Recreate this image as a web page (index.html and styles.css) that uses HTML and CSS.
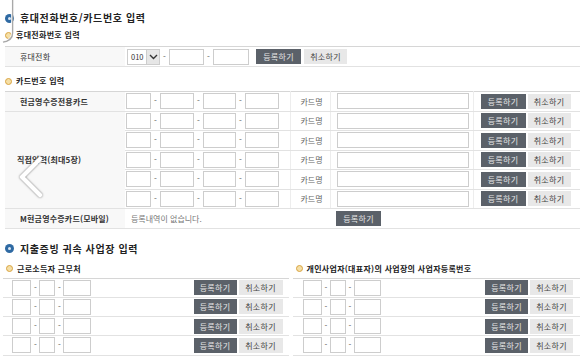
FILE: index.html
```html
<!DOCTYPE html>
<html lang="ko">
<head>
    <meta charset="UTF-8">
    <meta name="viewport" content="width=device-width, initial-scale=1.0">
    <title>휴대전화번호/카드번호 입력</title>
    <link rel="stylesheet" href="styles.css">
</head>
<body>
    <div class="wrap">
        <h2 class="tit"><span class="ico-blue"></span>휴대전화번호/카드번호 입력</h2>
        <h3 class="sub"><span class="ico-gold"></span>휴대전화번호 입력</h3>

        <table class="tbl tbl-phone">
            <colgroup><col class="c-label"><col></colgroup>
            <tr>
                <th class="normal">휴대전화</th>
                <td>
                    <div class="field pl2">
                        <span class="sel">010<span class="arr"><svg width="9" height="6" viewBox="0 0 9 6"><path d="M1 1 L4.5 4.5 L8 1" fill="none" stroke="#333" stroke-width="1.4"/></svg></span></span>
                        <span class="dash">-</span>
                        <input type="text" class="w35">
                        <span class="dash">-</span>
                        <input type="text" class="w36">
                        <button class="btn btn-reg ml7">등록하기</button>
                        <button class="btn btn-cancel">취소하기</button>
                    </div>
                </td>
            </tr>
        </table>

        <h3 class="sub sub-card"><span class="ico-gold"></span>카드번호 입력</h3>

        <table class="tbl tbl-card">
            <colgroup>
                <col class="c-label"><col class="c-nums"><col class="c-nm"><col class="c-nmin"><col>
            </colgroup>
            <tr>
                <th>현금영수증전용카드</th>
                <td><div class="field pl1"><input type="text" class="w25"><span class="dash">-</span><input type="text" class="w34"><span class="dash">-</span><input type="text" class="w33"><span class="dash">-</span><input type="text" class="w34"></div></td>
                <td class="nm vl">카드명</td>
                <td class="vl"><input type="text" class="w132 ml6"></td>
                <td class="vl"><div class="field pl7"><button class="btn btn-reg">등록하기</button><button class="btn btn-cancel">취소하기</button></div></td>
            </tr>
            <tr>
                <th rowspan="5" class="pl12">직접입력(최대5장)</th>
                <td><div class="field pl1"><input type="text" class="w25"><span class="dash">-</span><input type="text" class="w34"><span class="dash">-</span><input type="text" class="w33"><span class="dash">-</span><input type="text" class="w34"></div></td>
                <td class="nm vl">카드명</td>
                <td class="vl"><input type="text" class="w132 ml6"></td>
                <td class="vl"><div class="field pl7"><button class="btn btn-reg">등록하기</button><button class="btn btn-cancel">취소하기</button></div></td>
            </tr>
            <tr>
                <td><div class="field pl1"><input type="text" class="w25"><span class="dash">-</span><input type="text" class="w34"><span class="dash">-</span><input type="text" class="w33"><span class="dash">-</span><input type="text" class="w34"></div></td>
                <td class="nm vl">카드명</td>
                <td class="vl"><input type="text" class="w132 ml6"></td>
                <td class="vl"><div class="field pl7"><button class="btn btn-reg">등록하기</button><button class="btn btn-cancel">취소하기</button></div></td>
            </tr>
            <tr>
                <td><div class="field pl1"><input type="text" class="w25"><span class="dash">-</span><input type="text" class="w34"><span class="dash">-</span><input type="text" class="w33"><span class="dash">-</span><input type="text" class="w34"></div></td>
                <td class="nm vl">카드명</td>
                <td class="vl"><input type="text" class="w132 ml6"></td>
                <td class="vl"><div class="field pl7"><button class="btn btn-reg">등록하기</button><button class="btn btn-cancel">취소하기</button></div></td>
            </tr>
            <tr>
                <td><div class="field pl1"><input type="text" class="w25"><span class="dash">-</span><input type="text" class="w34"><span class="dash">-</span><input type="text" class="w33"><span class="dash">-</span><input type="text" class="w34"></div></td>
                <td class="nm vl">카드명</td>
                <td class="vl"><input type="text" class="w132 ml6"></td>
                <td class="vl"><div class="field pl7"><button class="btn btn-reg">등록하기</button><button class="btn btn-cancel">취소하기</button></div></td>
            </tr>
            <tr>
                <td><div class="field pl1"><input type="text" class="w25"><span class="dash">-</span><input type="text" class="w34"><span class="dash">-</span><input type="text" class="w33"><span class="dash">-</span><input type="text" class="w34"></div></td>
                <td class="nm vl">카드명</td>
                <td class="vl"><input type="text" class="w132 ml6"></td>
                <td class="vl"><div class="field pl7"><button class="btn btn-reg">등록하기</button><button class="btn btn-cancel">취소하기</button></div></td>
            </tr>
            <tr class="row-m">
                <th>M현금영수증카드(모바일)</th>
                <td colspan="2" class="none">등록내역이 없습니다.</td>
                <td><div class="field pl6"><button class="btn btn-reg">등록하기</button></div></td>
                <td></td>
            </tr>
        </table>

        <h2 class="tit tit-biz"><span class="ico-blue"></span>지출증빙 귀속 사업장 입력</h2>

        <div class="biz">
            <div class="biz-col biz-left">
                <h3 class="sub"><span class="ico-gold"></span>근로소득자 근무처</h3>
                <div class="biz-list">
                    <div class="biz-row"><input type="text" class="w19"><span class="dash">-</span><input type="text" class="w16"><span class="dash">-</span><input type="text" class="w28"><button class="btn btn-reg w43 push">등록하기</button><button class="btn btn-cancel w44">취소하기</button></div>
                    <div class="biz-row"><input type="text" class="w19"><span class="dash">-</span><input type="text" class="w16"><span class="dash">-</span><input type="text" class="w28"><button class="btn btn-reg w43 push">등록하기</button><button class="btn btn-cancel w44">취소하기</button></div>
                    <div class="biz-row"><input type="text" class="w19"><span class="dash">-</span><input type="text" class="w16"><span class="dash">-</span><input type="text" class="w28"><button class="btn btn-reg w43 push">등록하기</button><button class="btn btn-cancel w44">취소하기</button></div>
                    <div class="biz-row"><input type="text" class="w19"><span class="dash">-</span><input type="text" class="w16"><span class="dash">-</span><input type="text" class="w28"><button class="btn btn-reg w43 push">등록하기</button><button class="btn btn-cancel w44">취소하기</button></div>
                </div>
            </div>
            <div class="biz-col biz-right">
                <h3 class="sub"><span class="ico-gold"></span>개인사업자(대표자)의 사업장의 사업자등록번호</h3>
                <div class="biz-list">
                    <div class="biz-row"><input type="text" class="w19"><span class="dash">-</span><input type="text" class="w16"><span class="dash">-</span><input type="text" class="w27"><button class="btn btn-reg w43 push">등록하기</button><button class="btn btn-cancel w43">취소하기</button></div>
                    <div class="biz-row"><input type="text" class="w19"><span class="dash">-</span><input type="text" class="w16"><span class="dash">-</span><input type="text" class="w27"><button class="btn btn-reg w43 push">등록하기</button><button class="btn btn-cancel w43">취소하기</button></div>
                    <div class="biz-row"><input type="text" class="w19"><span class="dash">-</span><input type="text" class="w16"><span class="dash">-</span><input type="text" class="w27"><button class="btn btn-reg w43 push">등록하기</button><button class="btn btn-cancel w43">취소하기</button></div>
                    <div class="biz-row"><input type="text" class="w19"><span class="dash">-</span><input type="text" class="w16"><span class="dash">-</span><input type="text" class="w27"><button class="btn btn-reg w43 push">등록하기</button><button class="btn btn-cancel w43">취소하기</button></div>
                </div>
            </div>
        </div>
    </div>

    <!-- slider overlay on top of the page -->
    <svg class="overlay" width="584" height="363" viewBox="0 0 584 363">
        <path d="M12.5 0 V33 Q12.5 40.5 3 42" fill="none" stroke="#a9a9a9" stroke-width="1.6"/>
        <path d="M11.5 0 V33 Q11.5 39.5 3 41" fill="none" stroke="#fff" stroke-width="0.8"/>
        <path class="chev" d="M40 159 L22 177 L40 195" fill="none" stroke="#fff" stroke-width="4.5" stroke-linecap="round" stroke-linejoin="round"/>
    </svg>
</body>
</html>
```

FILE: styles.css
```css
body {
    margin: 0;
    background: #fff;
    font-family: "Noto Sans CJK KR", "Noto Sans", sans-serif;
    font-size: 8px;
    color: #333;
}
.wrap {
    width: 575px;
    padding: 10px 4px 0 5px;
}
.tit {
    display: flex;
    align-items: center;
    margin: 0;
    height: 16px;
    line-height: 16px;
    font-size: 10px;
    font-weight: bold;
    letter-spacing: 0.6px;
    color: #222;
}
.tit-biz {
    margin-top: 12px;
}
.ico-blue {
    position: relative;
    width: 9px;
    height: 9px;
    border-radius: 50%;
    background: #2f6aa3;
    margin-right: 6px;
}
.ico-blue::after {
    content: "";
    position: absolute;
    left: 3px;
    top: 3px;
    width: 3px;
    height: 3px;
    border-radius: 50%;
    background: #dce8f5;
}
.sub {
    display: flex;
    align-items: center;
    margin: 2px 0 0;
    height: 14px;
    line-height: 14px;
    font-size: 8px;
    font-weight: bold;
    letter-spacing: 0.3px;
    color: #222;
}
.sub-card {
    margin-top: 7px;
}
.ico-gold {
    width: 5px;
    height: 5px;
    border-radius: 50%;
    background: #f5dfa6;
    border: 1px solid #d9a441;
    margin: 0 4px 0 0;
}
table {
    border-collapse: collapse;
    table-layout: fixed;
    width: 575px;
}
.tbl {
    border-top: 1px solid #d6d6d6;
}
.tbl-phone {
    margin-top: 4px;
}
.tbl-card {
    margin-top: 3px;
}
.tbl th,
.tbl td {
    height: 18.5px;
    padding: 0;
    border-bottom: 1px solid #e2e2e2;
    vertical-align: middle;
    white-space: nowrap;
}
.tbl th {
    text-align: left;
    padding-left: 15px;
    background: #f8f8f8;
    font-weight: bold;
    letter-spacing: 0.2px;
    color: #333;
}
.tbl th.normal {
    font-weight: normal;
}
.tbl th.pl12 {
    padding-left: 12px;
}
.tbl-phone th,
.tbl-phone td {
    height: 19px;
}
.c-label { width: 120px; }
.c-nums { width: 165px; }
.c-nm { width: 40px; }
.c-nmin { width: 143px; }
.vl {
    border-left: 1px solid #ededed;
}
.nm {
    padding-left: 10px !important;
    color: #666;
}
.none {
    padding-left: 6px !important;
    color: #777;
}
.field {
    display: flex;
    align-items: center;
}
.pl1 { padding-left: 1px; }
.pl2 { padding-left: 2px; }
.pl6 { padding-left: 6px; }
.pl7 { padding-left: 7px; }
.ml6 { margin-left: 6px; }
.ml7 { margin-left: 7px; }
input {
    box-sizing: border-box;
    height: 16px;
    margin: 0;
    padding: 0;
    border: 1px solid #cdcdcd;
    background: #fff;
    vertical-align: middle;
}
.w16 { width: 16px; }
.w19 { width: 19px; }
.w25 { width: 25px; }
.w27 { width: 27px; }
.w28 { width: 28px; }
.w33 { width: 33px; }
.w34 { width: 34px; }
.w35 { width: 35px; }
.w36 { width: 36px; }
.w132 { width: 132px; }
.dash {
    width: 3px;
    margin: 0 3px;
    text-align: center;
    color: #555;
    line-height: 16px;
}
.sel {
    box-sizing: border-box;
    display: flex;
    align-items: center;
    width: 33px;
    height: 16px;
    border: 1px solid #cdcdcd;
    padding-left: 3px;
    font-size: 7.5px;
    color: #333;
}
.arr {
    display: flex;
    align-items: center;
    justify-content: center;
    margin-left: auto;
    width: 12px;
    height: 14px;
    background: #e6e6e6;
    border-left: 1px solid #cdcdcd;
}
.btn {
    height: 15px;
    padding: 0;
    border: none;
    font-family: inherit;
    font-size: 8px;
    line-height: 15px;
    letter-spacing: 0.3px;
    cursor: pointer;
}
.btn-reg {
    width: 45px;
    background: #5b6169;
    color: #e6e6e6;
}
.btn-cancel {
    width: 43px;
    margin-left: 2px;
    background: #e8e8e8;
    color: #444;
}
.tbl-phone .btn-cancel {
    margin-left: 3px;
}
.w43 { width: 43px; }
.w44 { width: 44px; }
.push { margin-left: auto; }

.biz {
    display: flex;
    gap: 4px;
    margin-left: -2px;
    margin-top: 5px;
}
.biz-left { width: 286px; }
.biz-right { width: 288px; }
.biz-col .sub {
    margin-top: 0;
    padding-left: 3px;
}
.biz-list {
    margin-top: 2px;
    border-top: 1px solid #d6d6d6;
}
.biz-row {
    display: flex;
    align-items: center;
    height: 18.25px;
    border-bottom: 1px solid #e2e2e2;
}
.biz-left .biz-row {
    padding: 0 6px 0 9px;
}
.biz-right .biz-row {
    padding: 0 7px 0 10px;
}
.biz-row .dash {
    margin: 0 2px 0 3px;
}
.overlay {
    position: absolute;
    left: 0;
    top: 0;
    pointer-events: none;
}
.chev {
    filter: drop-shadow(0 0 1px rgba(0, 0, 0, 0.55));
}
```
